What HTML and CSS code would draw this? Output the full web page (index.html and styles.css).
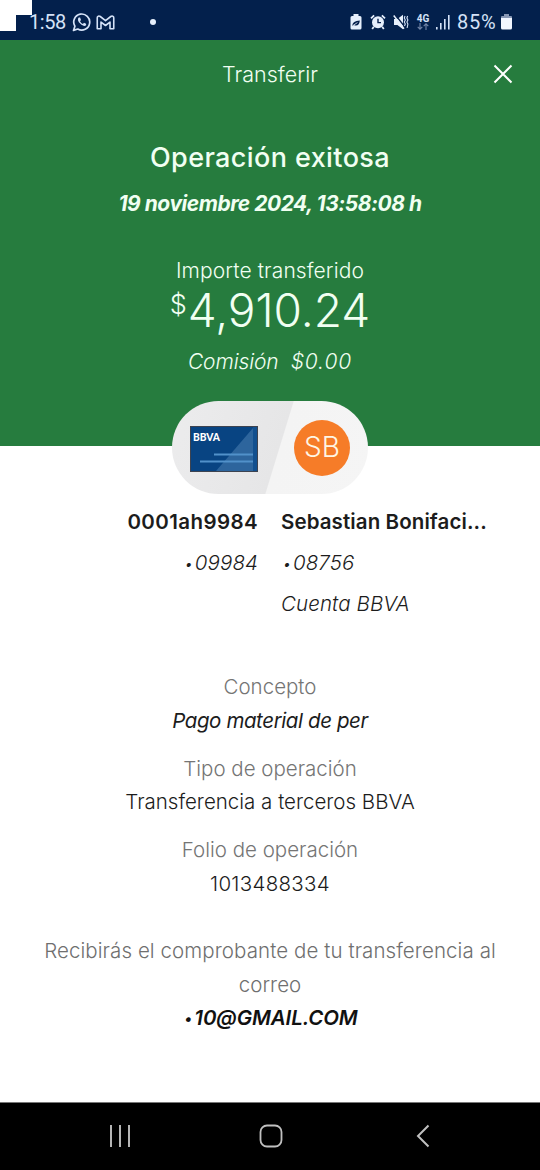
FILE: index.html
```
<!DOCTYPE html>
<html lang="es">
<head>
    <meta charset="UTF-8">
    <meta name="viewport" content="width=device-width, initial-scale=1.0">
    <title>Transferir</title>
    <link rel="stylesheet" href="styles.css">
</head>
<body>

    <div class="statusbar">
        <div class="corner"></div>
        <span class="clock">1:58</span>
        <svg class="whatsapp" width="20" height="20" viewBox="0 0 20 20" fill="none" stroke="#d5e2f7" stroke-width="1.7">
            <path d="M2.9 14.2A8 8 0 1 1 5.8 17L1.5 18.4Z" stroke-linejoin="round"/>
            <path d="M6.7 5.4C5.2 7 6 9.5 8.4 11.8S13 14.6 14.2 13.1L14 11.7 12 10.8 10.9 12C9.8 11.5 8.6 10.4 8 9.2L9 8 8.1 5.6Z" fill="#d5e2f7" stroke="none"/>
        </svg>
        <svg class="gmail" width="19" height="15" viewBox="0 0 20 16" fill="none" stroke="#d5e2f7" stroke-width="1.7" stroke-linejoin="round">
            <path d="M1.2 14.6V3C1.2 1 3.2.7 4.4 1.6L10 6 15.6 1.6C16.8.7 18.8 1 18.8 3V14.6H14.8V7.5L10 11.2 5.2 7.5V14.6Z"/>
        </svg>
        <span class="dot"></span>
        <svg class="saver" width="12" height="16" viewBox="0 0 12 16">
            <path d="M3.5 0H8.5V2H10Q11.5 2 11.5 3.5V14Q11.5 15.6 10 15.6H2Q.5 15.6 .5 14V3.5Q.5 2 2 2H3.5Z" fill="#e6effc"/>
            <path d="M2.4 11.8C2.5 8 5 7 9.8 6.4 9.7 10.5 7 12.4 4 10.9Z" fill="#06204c"/>
            <path d="M3.2 11.3L7.5 8.6" stroke="#e6effc" stroke-width=".8"/>
        </svg>
        <svg class="alarm" width="16" height="16" viewBox="0 0 16 16" fill="none">
            <circle cx="8" cy="8.2" r="6" fill="#e6effc"/>
            <path d="M1 4.3L4.1 1.3M15 4.3L11.9 1.3M3.8 12.8L2.2 15M12.2 12.8L13.8 15" stroke="#e6effc" stroke-width="1.8"/>
            <path d="M8 4.7V8.6H11" stroke="#06204c" stroke-width="1.4"/>
        </svg>
        <svg class="mute" width="16" height="16" viewBox="0 0 16 16" fill="none">
            <path d="M1 5H4.4L10 .8V15.2L4.4 11H1Z" fill="#e6effc"/>
            <path d="M2 .4L12 13.2" stroke="#06204c" stroke-width="1.4"/>
            <path d="M.7 1.5L11 14.7" stroke="#e6effc" stroke-width="1.5"/>
            <path d="M12 2L11.3 4 12.3 6 11.3 8 12.3 10 11.5 12M14.6 2L13.9 4 14.9 6 13.9 8 14.9 10 14.1 14" stroke="#d5e2f7" stroke-width="1.1"/>
        </svg>
        <div class="network">
            <span>4G</span>
            <svg width="12" height="7" viewBox="0 0 12 7" fill="none" stroke="#7386a8" stroke-width="1.1">
                <path d="M3 0V6M.7 3.8L3 6.2 5.3 3.8M9 7V1M6.7 3.2L9 .8 11.3 3.2"/>
            </svg>
        </div>
        <svg class="signal" width="15" height="15" viewBox="0 0 15 15" fill="#d5e2f7">
            <rect x="0" y="12" width="1.6" height="2.5"/>
            <rect x="4" y="8" width="1.6" height="6.5"/>
            <rect x="8" y="4" width="1.6" height="10.5"/>
            <rect x="12" y="0" width="1.6" height="14.5"/>
        </svg>
        <span class="percent">85%</span>
        <svg class="battery" width="11" height="16" viewBox="0 0 11 16">
            <path d="M3 0H8V2H10Q11 2 11 3V5H0V3Q0 2 1 2H3Z" fill="#8797b5"/>
            <path d="M0 4H11V14Q11 15.5 9.5 15.5H1.5Q0 15.5 0 14Z" fill="#f1f6ff"/>
        </svg>
    </div>

    <div class="hero">
        <div class="header">
            <span class="header-title">Transferir</span>
            <svg class="close" width="20" height="20" viewBox="0 0 20 20" stroke="#fff" stroke-width="2">
                <path d="M1.5 1.5L18.5 18.5M18.5 1.5L1.5 18.5"/>
            </svg>
        </div>
        <h1>Operación exitosa</h1>
        <p class="date">19 noviembre 2024, 13:58:08 h</p>
        <p class="amount-label">Importe transferido</p>
        <p class="amount"><span class="currency">$</span>4,910.24</p>
        <p class="fee"><span>Comisión</span><span class="fee-value">$0.00</span></p>
    </div>

    <div class="pill">
        <svg class="card" width="68" height="46" viewBox="0 0 68 46">
            <rect x=".5" y=".5" width="67" height="45" fill="#084482" stroke="#3d4350"/>
            <path d="M26 45L63 2V45Z" fill="#2d659d"/>
            <path d="M63 1H67V45H63Z" fill="#12508f"/>
            <path d="M24 28.5H63M10 35.5H63" stroke="#5191ca" stroke-width="2"/>
            <text class="card-brand" x="3" y="15" textLength="27" lengthAdjust="spacingAndGlyphs">BBVA</text>
        </svg>
        <div class="avatar">SB</div>
    </div>

    <div class="accounts">
        <div class="account from">
            <strong>0001ah9984</strong>
            <em><span class="bullet">•</span>09984</em>
        </div>
        <div class="account to">
            <strong>Sebastian Bonifaci...</strong>
            <em><span class="bullet">•</span>08756</em>
            <em>Cuenta BBVA</em>
        </div>
    </div>

    <dl class="details">
        <div>
            <dt>Concepto</dt>
            <dd class="concept">Pago material de per</dd>
        </div>
        <div>
            <dt>Tipo de operación</dt>
            <dd>Transferencia a terceros BBVA</dd>
        </div>
        <div>
            <dt>Folio de operación</dt>
            <dd class="folio">1013488334</dd>
        </div>
    </dl>

    <div class="receipt">
        <p>Recibirás el comprobante de tu transferencia al<br>correo</p>
        <p class="email"><span class="bullet">•</span>10@GMAIL.COM</p>
    </div>

    <div class="navbar">
        <svg width="22" height="22" viewBox="0 0 22 22" stroke="#b5b5b5" stroke-width="2">
            <path d="M2 0V22M11 0V22M20 0V22"/>
        </svg>
        <svg class="home" width="24" height="24" viewBox="0 0 24 24" fill="none" stroke="#c0c0c0" stroke-width="1.8">
            <rect x="1.5" y="1.5" width="21" height="21" rx="6.5"/>
        </svg>
        <svg width="14" height="24" viewBox="0 0 14 24" fill="none" stroke="#c0c0c0" stroke-width="2">
            <path d="M12.5 1.5L2 12 12.5 22.5"/>
        </svg>
    </div>

</body>
</html>
```
FILE: styles.css
```
* {
    box-sizing: border-box;
}
body {
    font-family: Inter, 'Open Sans', sans-serif;
    font-size: 20.5px;
    font-weight: 300;
    background-color: #fff;
    color: #1c1c1c;
    margin: 0;
    height: 1170px;
    display: flex;
    flex-direction: column;
    overflow: hidden;
    white-space: nowrap;
}
h1, p, dl, dd {
    margin: 0;
}
svg {
    display: block;
    flex: none;
}
.statusbar {
    position: relative;
    height: 40px;
    padding: 4px 28px 0 29px;
    display: flex;
    align-items: center;
    background-color: #03204c;
    color: #d5e2f7;
    font-family: Roboto, sans-serif;
    font-size: 20px;
    font-weight: 400;
}
/* white steps over the top left corner */
.corner {
    position: absolute;
    left: 0;
    top: 0;
    width: 32px;
    height: 31px;
    background-color: #fff;
    clip-path: polygon(0 0, 100% 0, 100% 15px, 16px 15px, 16px 100%, 0 100%);
}
.clock {
    width: 37px;
    letter-spacing: -0.4px;
}
.whatsapp {
    margin-left: 6px;
}
.gmail {
    margin-left: 4px;
}
.dot {
    width: 6px;
    height: 6px;
    margin-left: 35px;
    border-radius: 50%;
    background-color: #e6effc;
}
.saver {
    margin-left: auto;
}
.alarm {
    margin-left: 8px;
}
.mute {
    margin-left: 7px;
}
.network {
    margin-left: 7px;
    display: flex;
    flex-direction: column;
    align-items: center;
    width: 14px;
    font-size: 10px;
    line-height: 9px;
    font-weight: 700;
}
.signal {
    margin-left: 6px;
}
.percent {
    margin-left: 6px;
    width: 42px;
    letter-spacing: 0.8px;
}
.battery {
    margin-left: 2px;
}
.hero {
    height: 406px;
    background-color: #267c3e;
    color: #f1fff2;
    text-align: center;
}
.header {
    height: 68px;
    display: grid;
    grid-template-columns: 1fr auto 1fr;
    align-items: center;
    padding-right: 27px;
    padding-left: 27px;
}
.header-title {
    grid-column: 2;
    font-size: 21.5px;
}
.close {
    justify-self: end;
}
h1 {
    margin-top: 30px;
    font-size: 27px;
    line-height: 40px;
    font-weight: 500;
    letter-spacing: 0.4px;
}
.date {
    margin-top: 11px;
    font-size: 21px;
    line-height: 30px;
    font-weight: 700;
    font-style: italic;
    letter-spacing: -0.46px;
}
.amount-label {
    margin-top: 38px;
    font-size: 21px;
    line-height: 28px;
    letter-spacing: 0.1px;
}
.amount {
    line-height: 50px;
    font-size: 46px;
}
.currency {
    margin-right: 1px;
    font-size: 27px;
    vertical-align: 13px;
    line-height: 1;
}
.fee {
    margin-top: 12px;
    display: flex;
    justify-content: center;
    gap: 12px;
    font-size: 21px;
    line-height: 30px;
    font-style: italic;
    letter-spacing: -0.1px;
}
.fee-value {
    letter-spacing: 0.9px;
}
.pill {
    position: relative;
    width: 196px;
    height: 93px;
    margin: -45px auto 0 172px;
    padding: 0 18px;
    display: flex;
    align-items: center;
    justify-content: space-between;
    border-radius: 47px;
    background: linear-gradient(107deg, #ececed 0, #e6e6e7 54%, #f4f4f4 54.5%, #f5f5f5 100%);
}
.card {
    margin-top: 3px;
}
.card-brand {
    font-family: Lato, sans-serif;
    font-size: 12px;
    font-weight: 900;
    fill: #fff;
}
.avatar {
    width: 56px;
    height: 56px;
    border-radius: 50%;
    background-color: #f67c28;
    color: #fff6e4;
    font-size: 28px;
    line-height: 55px;
    text-align: center;
}
.accounts {
    margin-top: 7px;
    display: grid;
    grid-template-columns: 258px 1fr;
    column-gap: 23px;
    line-height: 41px;
}
.account {
    display: flex;
    flex-direction: column;
}
.from {
    align-items: flex-end;
}
.to {
    align-items: flex-start;
}
.account strong {
    font-weight: 600;
    letter-spacing: 0.1px;
}
.account.from strong {
    letter-spacing: 0.4px;
}
.account em {
    letter-spacing: 0.1px;
}
.bullet {
    display: inline-block;
    width: 12px;
    font-size: 15px;
    text-align: center;
    vertical-align: 1px;
    line-height: 1;
}
.details {
    margin-top: 46px;
    display: flex;
    flex-direction: column;
    gap: 14.6px;
    line-height: 33.5px;
    text-align: center;
}
.details dt {
    color: #757575;
}
.concept {
    font-style: italic;
    font-weight: 400;
    letter-spacing: -0.4px;
}
.folio {
    letter-spacing: 0.3px;
}
.receipt {
    margin-top: 34px;
    line-height: 33.5px;
    text-align: center;
    color: #6f6f6f;
    letter-spacing: 0.08px;
}
.email {
    color: #111;
    font-weight: 600;
    font-style: italic;
    letter-spacing: -0.1px;
}
.navbar {
    height: 68px;
    margin-top: auto;
    padding: 0 110px 2px 109px;
    display: flex;
    align-items: center;
    justify-content: space-between;
    border-top: 1px solid #777;
    background-color: #000;
}
.home {
    margin-right: 5px;
}
```
